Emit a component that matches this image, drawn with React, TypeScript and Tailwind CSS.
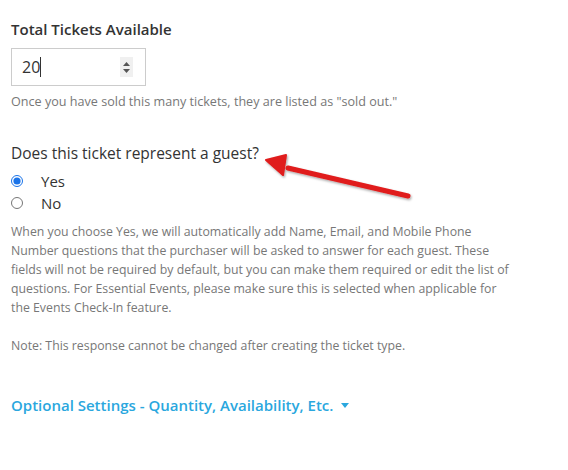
export default function App() {
  return (
    <div className="relative w-[568px] h-[470px] bg-white px-[11px] pt-[19px] text-[#777]" style={{ fontFamily: '"Open Sans", sans-serif' }}>
      {/* Total tickets */}
      <label className="block text-[15px] leading-[20px] font-semibold text-[#333]">Total Tickets Available</label>
      <div className="mt-[9px] flex items-center w-[135px] h-[38px] border border-[#ccc] pl-[10px] pr-[12px]">
        <span className="text-[16px] text-[#333] leading-none">20</span>
        <span className="w-px h-[20px] bg-[#333]"></span>
        <div className="ml-auto w-[13px] h-[20px] bg-[#f0f0f0] flex flex-col items-center justify-center gap-[3px]">
          <svg width="7" height="4" viewBox="0 0 7 4"><path d="M3.5 0 L7 4 L0 4 Z" fill="#555" /></svg>
          <svg width="7" height="4" viewBox="0 0 7 4"><path d="M0 0 L7 0 L3.5 4 Z" fill="#555" /></svg>
        </div>
      </div>
      <p className="mt-[6px] text-[12.6px] leading-[19px]">Once you have sold this many tickets, they are listed as "sold out."</p>

      {/* Guest question */}
      <h3 className="mt-[32px] text-[15.5px] leading-[20px] font-medium text-[#333]">Does this ticket represent a guest?</h3>
      <div className="mt-[7px] flex flex-col">
        <label className="flex items-center h-[22px] text-[15px] text-[#333]">
          <input type="radio" name="guest" defaultChecked className="w-[12px] h-[12px] m-0 accent-[#1a73e8]" />
          <span className="ml-[18px]">Yes</span>
        </label>
        <label className="flex items-center h-[22px] text-[15px] text-[#333]">
          <input type="radio" name="guest" className="w-[12px] h-[12px] m-0" />
          <span className="ml-[18px]">No</span>
        </label>
      </div>
      <p className="mt-[8px] w-[502px] text-[12.3px] leading-[19px]">
        When you choose Yes, we will automatically add Name, Email, and Mobile Phone Number questions that the purchaser will be asked to answer for each guest. These fields will not be required by default, but you can make them required or edit the list of questions. For Essential Events, please make sure this is selected when applicable for the Events Check-In feature.
      </p>
      <p className="mt-[19px] text-[12.3px] leading-[19px]">Note: This response cannot be changed after creating the ticket type.</p>

      <div className="mt-[40px] flex items-center gap-[8px] text-[15px] leading-[20px] font-semibold text-[#2aa7de]">
        <span>Optional Settings - Quantity, Availability, Etc.</span>
        <svg width="8" height="5" viewBox="0 0 8 5"><path d="M0 0 L8 0 L4 5 Z" fill="#2aa7de" /></svg>
      </div>

      {/* annotation arrow */}
      <svg className="absolute left-0 top-0 pointer-events-none" width="568" height="470" viewBox="0 0 568 470">
        <defs>
          <filter id="sh" x="-10%" y="-50%" width="120%" height="200%">
            <feDropShadow dx="1" dy="1.5" stdDeviation="1.2" floodColor="#000" floodOpacity="0.35" />
          </filter>
        </defs>
        <g filter="url(#sh)">
          <path d="M408 196 L288 168" stroke="#e01b1b" strokeWidth="5" strokeLinecap="round" />
          <path d="M266 160 L286 155 L283 175 Z" fill="#e01b1b" stroke="#e01b1b" strokeWidth="2" strokeLinejoin="round" />
        </g>
      </svg>
    </div>
  )
}
